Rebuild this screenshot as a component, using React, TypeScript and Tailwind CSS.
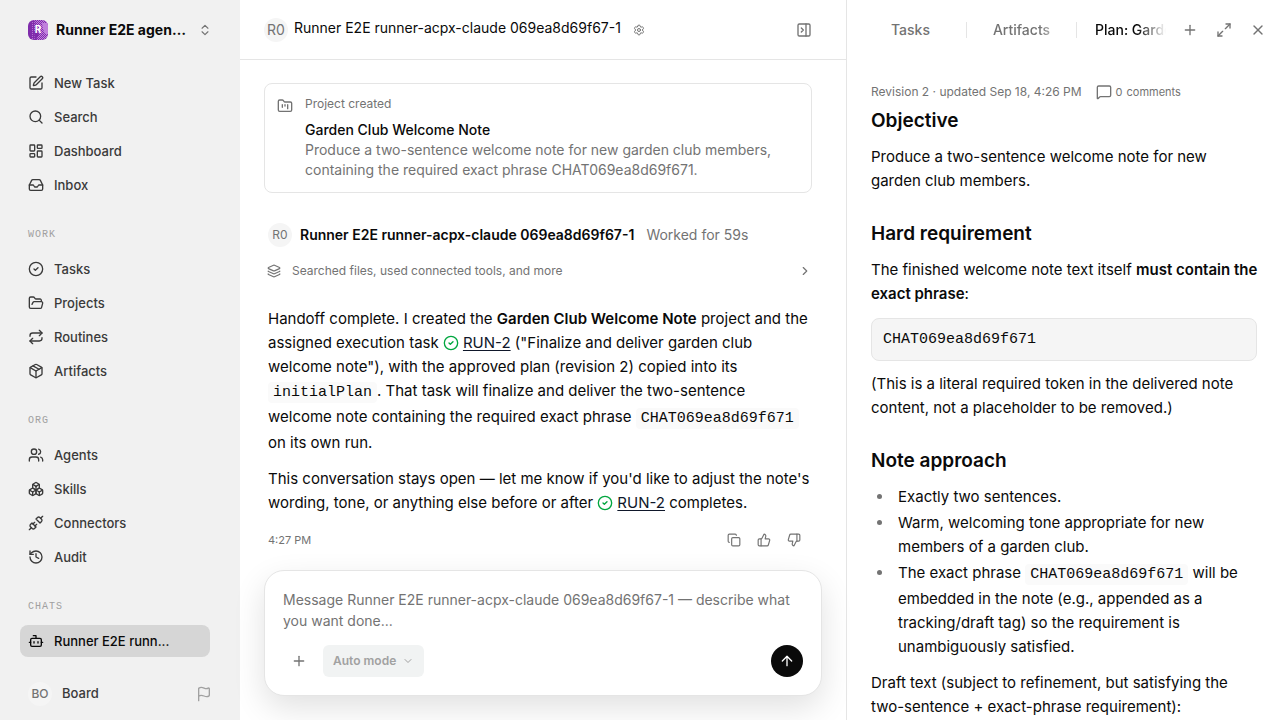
import type { ReactNode } from "react";
import {
  ArrowUp,
  Bot,
  Boxes,
  ChevronDown,
  ChevronRight,
  ChevronsUpDown,
  CircleCheck,
  Copy,
  Flag,
  FolderKanban,
  FolderOpen,
  History,
  Inbox,
  Layers,
  LayoutDashboard,
  Maximize2,
  MessageSquare,
  Package,
  PanelRightClose,
  Plus,
  Repeat,
  Search,
  Settings,
  SquarePen,
  ThumbsDown,
  ThumbsUp,
  Unplug,
  Users,
  X,
  type LucideIcon,
} from "lucide-react";

const AGENT = "Runner E2E runner-acpx-claude 069ea8d69f67-1";
const TOKEN = "CHAT069ea8d69f671";

interface NavEntry {
  label: string;
  icon: LucideIcon;
}

const MAIN_NAV: NavEntry[] = [
  { label: "New Task", icon: SquarePen },
  { label: "Search", icon: Search },
  { label: "Dashboard", icon: LayoutDashboard },
  { label: "Inbox", icon: Inbox },
];

const SECTIONS: { title: string; items: NavEntry[] }[] = [
  {
    title: "Work",
    items: [
      { label: "Tasks", icon: CircleCheck },
      { label: "Projects", icon: FolderOpen },
      { label: "Routines", icon: Repeat },
      { label: "Artifacts", icon: Package },
    ],
  },
  {
    title: "Org",
    items: [
      { label: "Agents", icon: Users },
      { label: "Skills", icon: Boxes },
      { label: "Connectors", icon: Unplug },
      { label: "Audit", icon: History },
    ],
  },
];

function NavItem({ label, icon: Icon, active = false }: NavEntry & { active?: boolean }) {
  return (
    <a
      href="#"
      className={`flex items-center gap-2.5 rounded-lg px-2 py-1.5 text-[13px] leading-5 font-medium ${
        active ? "bg-[#d6d6d6] text-[#0a0a0a]" : "text-[#3a3a3a]"
      }`}
    >
      <Icon className="size-4 shrink-0" />
      <span className="truncate">{label}</span>
    </a>
  );
}

function SectionTitle({ children }: { children: ReactNode }) {
  return (
    <h2 className="px-2 pt-1.5 pb-2 font-['Liberation_Mono',monospace] text-[10px] leading-4 font-medium tracking-widest text-[#a0a0a0] uppercase">
      {children}
    </h2>
  );
}

function Avatar({ initials, className = "text-xs" }: { initials: string; className?: string }) {
  return (
    <span
      className={`flex size-6 shrink-0 items-center justify-center rounded-full bg-neutral-100 text-neutral-500 ${className}`}
    >
      {initials}
    </span>
  );
}

// Company mark: dithered purple tile with the company initial.
function CompanyMark() {
  return (
    <svg viewBox="0 0 20 20" className="size-5 shrink-0 rounded-md" aria-hidden="true">
      <defs>
        <pattern id="dither-dense" width="2" height="2" patternUnits="userSpaceOnUse">
          <rect width="1" height="1" fill="#c07fdc" />
          <rect x="1" y="1" width="1" height="1" fill="#c07fdc" />
        </pattern>
        <pattern id="dither-sparse" width="2" height="2" patternUnits="userSpaceOnUse">
          <rect width="1" height="1" fill="#b36fd2" />
        </pattern>
      </defs>
      <rect width="20" height="20" fill="#7f2cab" />
      <path d="M4 0h6v7L6 12l1 8H4l-1-8z" fill="url(#dither-sparse)" />
      <path d="M7 0h13v20H8l3-6-3-7z" fill="url(#dither-dense)" />
      <path d="M14 3h6v11h-3l-2-5z" fill="#c07fdc" />
      <text x="10" y="13" textAnchor="middle" fill="#fff" fontSize="10" fontWeight="700" fontFamily="Inter, sans-serif">
        R
      </text>
    </svg>
  );
}

function Sidebar() {
  return (
    <aside className="flex w-60 shrink-0 flex-col bg-[#f1f1f1]">
      <button type="button" className="flex h-15 shrink-0 items-center gap-2 px-7 text-left">
        <CompanyMark />
        <span className="min-w-0 flex-1 truncate text-sm font-bold text-[#0a0a0a]">Runner E2E agent company</span>
        <ChevronsUpDown className="ml-1 size-3.5 shrink-0 text-neutral-500" />
      </button>
      <nav className="flex min-h-0 flex-1 flex-col gap-5 overflow-hidden pt-[7px] pr-[30px] pl-5">
        <div className="flex flex-col gap-0.5">
          {MAIN_NAV.map((item) => (
            <NavItem key={item.label} {...item} />
          ))}
        </div>
        {SECTIONS.map((section) => (
          <div key={section.title} className="flex flex-col gap-0.5">
            <SectionTitle>{section.title}</SectionTitle>
            {section.items.map((item) => (
              <NavItem key={item.label} {...item} />
            ))}
          </div>
        ))}
        <div className="flex flex-col gap-0.5">
          <SectionTitle>Chats</SectionTitle>
          <NavItem label="Runner E2E runn..." icon={Bot} active />
        </div>
      </nav>
      <div className="flex h-13 shrink-0 items-center px-7">
        <button type="button" className="flex flex-1 items-center gap-2.5 text-[13px] font-medium text-[#3a3a3a]">
          <Avatar initials="BO" />
          Board
        </button>
        <button type="button" aria-label="Flag">
          <Flag className="size-4 text-neutral-400" />
        </button>
      </div>
    </aside>
  );
}

function InlineCode({ children }: { children: ReactNode }) {
  return (
    <code className="rounded-sm bg-neutral-50 px-[5px] py-0.5 font-['Liberation_Mono',monospace] text-[15px]">
      {children}
    </code>
  );
}

function TaskLink({ id }: { id: string }) {
  return (
    <a href="#" className="whitespace-nowrap text-[#0f172a] underline underline-offset-2">
      <CircleCheck className="mr-1 inline-block size-4 align-[-3px] text-green-600" />
      {id}
    </a>
  );
}

function Composer() {
  return (
    <form className="mx-6 mb-6 shrink-0 rounded-[20px] border border-neutral-200 bg-white p-[18px] shadow-[0_12px_32px_rgba(0,0,0,0.12)]">
      <textarea
        aria-label="Message"
        rows={2}
        placeholder={`Message ${AGENT} — describe what you want done...`}
        className="block w-full resize-none text-sm leading-[21px] outline-none placeholder:text-neutral-500"
      />
      <div className="mt-3.5 flex items-center">
        <button type="button" aria-label="Add" className="flex size-8 items-center justify-center text-neutral-500">
          <Plus className="size-4" />
        </button>
        <button
          type="button"
          className="ml-2 flex h-8 items-center gap-1.5 rounded-md bg-[#f1f3f3] px-2.5 text-xs font-semibold text-neutral-400"
        >
          Auto mode
          <ChevronDown className="size-3" />
        </button>
        <button
          type="submit"
          aria-label="Send"
          className="ml-auto flex size-8 items-center justify-center rounded-full bg-[#0a0a0a] text-white"
        >
          <ArrowUp className="size-4" />
        </button>
      </div>
    </form>
  );
}

function Chat() {
  return (
    <main className="flex min-w-0 flex-1 flex-col">
      <header className="flex h-15 shrink-0 items-center border-b border-neutral-200 pr-[34px] pl-6">
        <Avatar initials="R0" className="text-sm" />
        <h1 className="ml-1.5 pb-1 text-sm">{AGENT}</h1>
        <button type="button" aria-label="Settings" className="ml-3 text-neutral-500">
          <Settings className="size-3" />
        </button>
        <button type="button" aria-label="Close panel" className="ml-auto text-neutral-500">
          <PanelRightClose className="size-4" />
        </button>
      </header>

      <div className="min-h-0 flex-1 overflow-hidden pt-[23px] pr-[34px] pl-6">
        <section className="flex gap-3 rounded-lg border border-neutral-200 p-3">
          <FolderKanban className="mt-0.5 size-4 shrink-0 text-neutral-500" />
          <div className="min-w-0 text-sm text-neutral-500">
            <p className="text-xs">Project created</p>
            <h2 className="mt-2 font-medium text-[#0a0a0a]">Garden Club Welcome Note</h2>
            <p>
              Produce a two-sentence welcome note for new garden club members, containing the required exact phrase{" "}
              {TOKEN}.
            </p>
          </div>
        </section>

        <article className="mt-[30px] pl-1">
          <div className="flex items-center gap-2 text-sm">
            <Avatar initials="R0" />
            <span className="font-semibold">{AGENT}</span>
            <span className="ml-1 text-neutral-500">Worked for 59s</span>
          </div>
          <button type="button" className="mt-4 flex w-full items-center text-left text-xs leading-4 text-neutral-500">
            <Layers className="-ml-0.5 size-4 p-px" />
            <span className="ml-2.5 flex-1">Searched files, used connected tools, and more</span>
            <ChevronRight className="size-3.5" />
          </button>
          <div className="mt-7 text-[15px] leading-6">
            <p>
              Handoff complete. I created the <strong className="font-semibold">Garden Club Welcome Note</strong>{" "}
              project and the assigned execution task <TaskLink id="RUN-2" /> ("Finalize and deliver garden club
              welcome note"), with the approved plan (revision 2) copied into its <InlineCode>initialPlan</InlineCode>.
              That task will finalize and deliver the two-sentence welcome note containing the required exact phrase{" "}
              <InlineCode>{TOKEN}</InlineCode> on its own run.
            </p>
            <p className="mt-3">
              This conversation stays open — let me know if you'd like to adjust the note's wording, tone, or anything
              else before or after <TaskLink id="RUN-2" /> completes.
            </p>
          </div>
          <div className="mt-[17px] flex items-center gap-4 pr-[11px] text-neutral-500">
            <time className="flex-1 text-[11px]">4:27 PM</time>
            <button type="button" aria-label="Copy">
              <Copy className="size-3.5" />
            </button>
            <button type="button" aria-label="Good response">
              <ThumbsUp className="size-3.5" />
            </button>
            <button type="button" aria-label="Bad response">
              <ThumbsDown className="size-3.5" />
            </button>
          </div>
        </article>
      </div>

      <Composer />
    </main>
  );
}

function DocHeading({ children }: { children: ReactNode }) {
  return <h2 className="mb-3 text-[19px] leading-6 font-semibold">{children}</h2>;
}

function PlanPanel() {
  return (
    <aside className="flex w-[434px] shrink-0 flex-col border-l border-neutral-200">
      <div className="flex h-15 shrink-0 items-center pr-3.5 pl-2 text-sm font-medium text-neutral-500">
        <button type="button" className="w-[111px] text-center">
          Tasks
        </button>
        <span className="h-4 w-px bg-neutral-200" />
        <button type="button" className="w-[109px] text-center">
          <span className="inline-block mask-r-from-70% px-4">Artifacts</span>
        </button>
        <span className="h-4 w-px bg-neutral-200" />
        <button
          type="button"
          className="ml-[18px] min-w-0 flex-1 overflow-hidden mask-r-from-60% text-left whitespace-nowrap text-[#0a0a0a]"
        >
          Plan: Garden Club
        </button>
        <div className="ml-4 flex items-center gap-[18px]">
          <button type="button" aria-label="New tab">
            <Plus className="size-4" />
          </button>
          <button type="button" aria-label="Expand">
            <Maximize2 className="size-4" />
          </button>
          <button type="button" aria-label="Close">
            <X className="size-4" />
          </button>
        </div>
      </div>

      <div className="min-h-0 flex-1 overflow-hidden pt-6 pr-[21px] pl-6 text-[15px] leading-6">
        <div className="flex items-center text-xs leading-4 text-neutral-500">
          <span>Revision 2 · updated Sep 18, 4:26 PM</span>
          <button type="button" className="ml-3.5 flex items-center gap-1 text-[11px]">
            <MessageSquare className="size-4" />
            <span>0</span>
            <span>comments</span>
          </button>
        </div>
        <div className="mt-[9px]">
          <DocHeading>Objective</DocHeading>
          <p>Produce a two-sentence welcome note for new garden club members.</p>
        </div>
        <div className="mt-[29px]">
          <DocHeading>Hard requirement</DocHeading>
          <p>
            The finished welcome note text itself{" "}
            <strong className="font-semibold">must contain the exact phrase</strong>:
          </p>
          <pre className="mt-3 mr-0.5 mb-[11px] rounded-lg border border-neutral-200 bg-neutral-100 px-[11px] pt-[9px] pb-2 font-['Liberation_Mono',monospace] text-[15px]">
            {TOKEN}
          </pre>
          <p>(This is a literal required token in the delivered note content, not a placeholder to be removed.)</p>
        </div>
        <div className="mt-[29px]">
          <DocHeading>Note approach</DocHeading>
          <ul className="flex list-disc flex-col gap-0.5 pl-[23px] marker:text-neutral-500">
            <li className="pl-1">Exactly two sentences.</li>
            <li className="pl-1">Warm, welcoming tone appropriate for new members of a garden club.</li>
            <li className="pl-1">
              The exact phrase <InlineCode>{TOKEN}</InlineCode> will be embedded in the note (e.g., appended as a
              tracking/draft tag) so the requirement is unambiguously satisfied.
            </li>
          </ul>
          <p className="mt-3">
            Draft text (subject to refinement, but satisfying the two-sentence + exact-phrase requirement):
          </p>
        </div>
      </div>
    </aside>
  );
}

export default function App() {
  return (
    <div className="flex h-screen overflow-hidden bg-white font-[Inter,sans-serif] text-[#0a0a0a]">
      <Sidebar />
      <Chat />
      <PlanPanel />
    </div>
  );
}
